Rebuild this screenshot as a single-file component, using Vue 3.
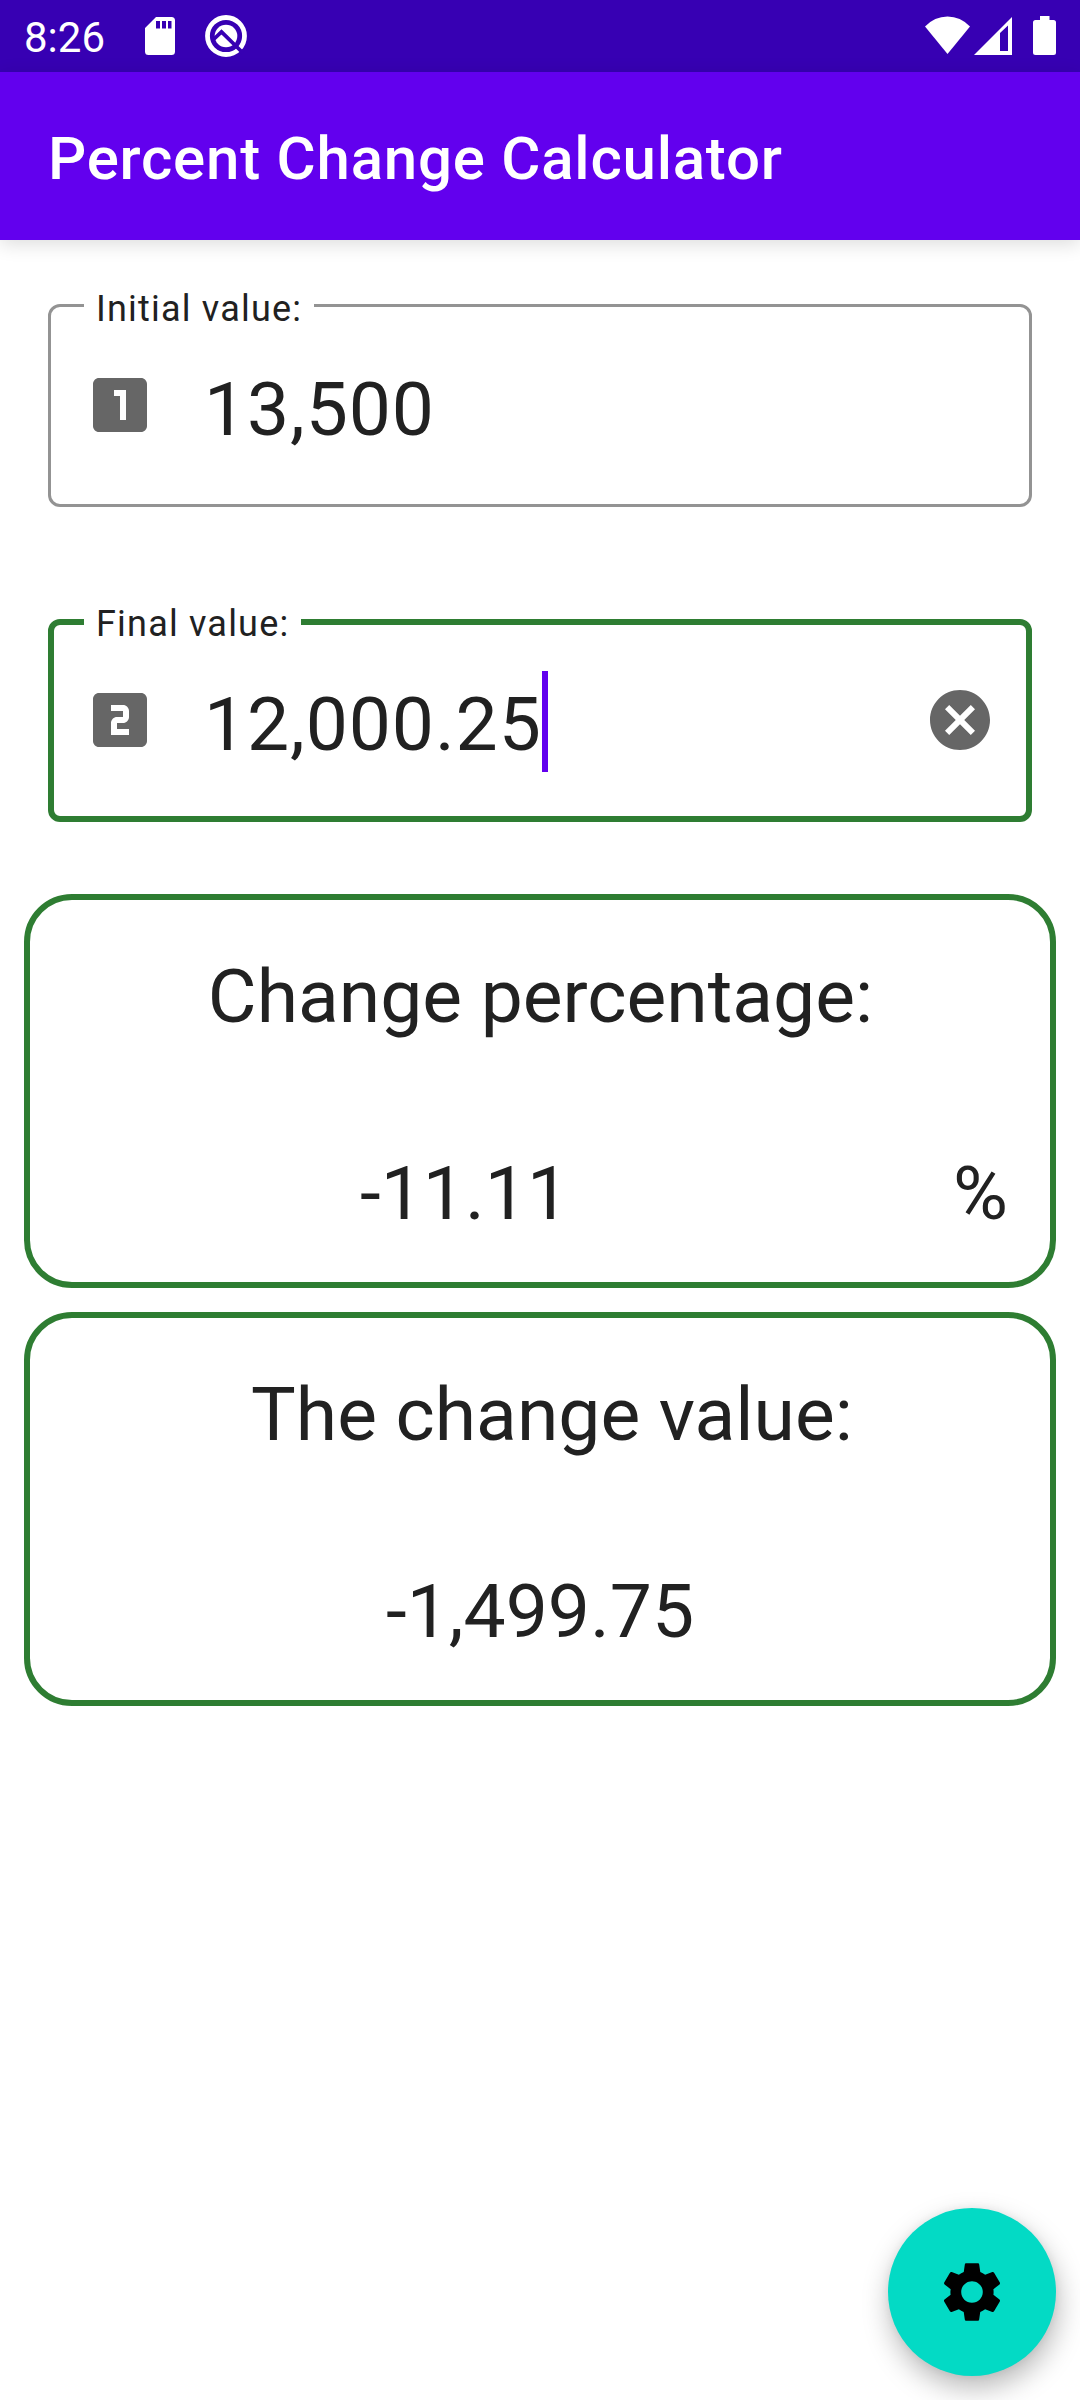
<script setup>
import { ref, computed } from "vue";

const initial = ref(13500);
const final = ref(12000.25);

const format = (value) =>
  value.toLocaleString("en-US", { maximumFractionDigits: 2 });

const change = computed(() => final.value - initial.value);
const percent = computed(() => (change.value / initial.value) * 100);
const clearFinal = () => {
  final.value = 0;
};
</script>

<template>
  <div class="screen">
    <div class="status-bar">
      <span class="clock">8:26</span>
      <svg class="sd" viewBox="0 0 30 38">
        <path
          fill-rule="evenodd"
          d="M11 0H26.5Q30 0 30 3.5V34.5Q30 38 26.5 38H3.5Q0 38 0 34.5V11ZM11 4V11.5H15V4ZM17 4V11.5H21V4ZM23 4V11.5H26.5V4Z"
        />
      </svg>
      <svg class="q-icon" viewBox="0 0 42 42">
        <circle cx="21" cy="21" r="18.5" fill="none" stroke="#fff" stroke-width="4.8" />
        <circle cx="21" cy="21" r="11.3" />
        <path d="M9 24L16.500 16.800L38 38" fill="none" stroke="#3700b3" stroke-width="3.8" />
      </svg>
      <div class="system">
        <svg class="wifi" viewBox="0 0 45 38">
          <path d="M0 10.500Q9.500 0.500 22.500 0.500T45 10.500L22.500 38Z" />
        </svg>
        <svg class="signal" viewBox="0 0 38 38">
          <path fill-rule="evenodd" d="M0 38L38 0V38ZM26 16V34H34V8.500Z" />
        </svg>
        <svg class="battery" viewBox="0 0 23 39">
          <path d="M7 0H16.500V4H20.500Q23 4 23 6.500V36.500Q23 39 20.500 39H2.500Q0 39 0 36.500V6.500Q0 4 2.500 4H7Z" />
        </svg>
      </div>
    </div>

    <header class="app-bar">
      <h1>Percent Change Calculator</h1>
    </header>

    <main>
      <div class="field">
        <label>Initial value:</label>
        <svg class="icon" viewBox="0 0 24 24">
          <path
            d="M19 3H5c-1.100 0-2 .9-2 2v14c0 1.100.9 2 2 2h14c1.100 0 2-.9 2-2V5c0-1.100-.9-2-2-2zM14 17h-2V9h-2V7h4v10z"
          />
        </svg>
        <span class="value">{{ format(initial) }}</span>
      </div>

      <div class="field active">
        <label>Final value:</label>
        <svg class="icon" viewBox="0 0 24 24">
          <path
            d="M19 3H5c-1.100 0-2 .9-2 2v14c0 1.100.9 2 2 2h14c1.100 0 2-.9 2-2V5c0-1.100-.9-2-2-2zM15 11c0 1.110-.9 2-2 2h-2v2h4v2H9v-4c0-1.110.9-2 2-2h2V9H9V7h4c1.100 0 2 .89 2 2v2z"
          />
        </svg>
        <span class="value">{{ format(final) }}</span>
        <span class="caret"></span>
        <svg class="icon clear" viewBox="0 0 24 24" @click="clearFinal">
          <path
            d="M12 2C6.470 2 2 6.470 2 12s4.470 10 10 10 10-4.470 10-10S17.530 2 12 2zM17 15.590L15.590 17 12 13.410 8.410 17 7 15.590 10.590 12 7 8.410 8.410 7 12 10.590 15.590 7 17 8.410 13.410 12z"
          />
        </svg>
      </div>

      <section class="card">
        <h2>Change percentage:</h2>
        <div class="result with-unit">
          <span class="number">{{ format(percent) }}</span>
          <span class="unit">%</span>
        </div>
      </section>

      <section class="card">
        <h2 class="shifted">The change value:</h2>
        <div class="result">
          <span class="number">{{ format(change) }}</span>
        </div>
      </section>
    </main>

    <button class="fab">
      <svg viewBox="0 0 24 24">
        <path
          d="M19.140,12.940c0.040-0.300,0.060-0.610,0.060-0.940c0-0.320-0.020-0.640-0.070-0.940l2.030-1.580c0.180-0.140,0.230-0.410,0.120-0.610l-1.920-3.320c-0.120-0.220-0.370-0.290-0.590-0.220l-2.390,0.960c-0.500-0.380-1.030-0.700-1.620-0.940L14.400,2.810c-0.040-0.240-0.240-0.410-0.480-0.410h-3.840c-0.240,0-0.430,0.170-0.470,0.410L9.250,5.350C8.660,5.590,8.120,5.920,7.630,6.290L5.240,5.330c-0.220-0.080-0.470,0-0.590,0.220L2.740,8.870C2.620,9.080,2.660,9.340,2.860,9.480l2.030,1.580C4.840,11.360,4.800,11.690,4.800,12s0.020,0.640,0.070,0.940l-2.030,1.580c-0.180,0.140-0.230,0.410-0.120,0.610l1.920,3.320c0.120,0.220,0.370,0.290,0.590,0.220l2.390-0.960c0.500,0.380,1.030,0.700,1.620,0.940l0.360,2.540c0.050,0.240,0.240,0.410,0.480,0.410h3.840c0.240,0,0.440-0.170,0.470-0.410l0.360-2.540c0.590-0.240,1.130-0.560,1.620-0.940l2.390,0.960c0.220,0.080,0.470,0,0.590-0.220l1.920-3.320c0.120-0.220,0.070-0.470-0.120-0.610L19.140,12.940zM12,15.600c-1.980,0-3.600-1.620-3.600-3.600s1.620-3.600,3.600-3.600s3.600,1.620,3.600,3.600S13.980,15.600,12,15.600z"
        />
      </svg>
    </button>
  </div>
</template>

<style>
body {
  margin: 0;
  background: #fff;
}
</style>

<style scoped>
.screen {
  position: relative;
  width: 1080px;
  height: 2400px;
  overflow: hidden;
  background: #fff;
  color: #212121;
  font-family: Roboto, sans-serif;
}

h1,
h2 {
  margin: 0;
}

svg {
  display: block;
  flex-shrink: 0;
}

.status-bar {
  display: flex;
  align-items: flex-start;
  box-sizing: border-box;
  height: 72px;
  padding: 0 24px;
  background: #3700b3;
  color: #fff;
}

.status-bar svg {
  fill: #fff;
}

.clock {
  width: 121px;
  padding-top: 13px;
  font-size: 42px;
  line-height: 49px;
}

.sd {
  width: 30px;
  height: 38px;
  margin-top: 17px;
}

.q-icon {
  width: 42px;
  height: 42px;
  margin: 15px 0 0 30px;
}

.system {
  display: flex;
  margin: 16px 0 0 auto;
}

.wifi {
  width: 45px;
  height: 38px;
}

.signal {
  width: 38px;
  height: 38px;
  margin: 1px 21px 0 4px;
}

.battery {
  width: 23px;
  height: 39px;
}

.app-bar {
  display: flex;
  align-items: center;
  box-sizing: border-box;
  height: 168px;
  padding: 6px 48px 0;
  background: #6200ee;
  box-shadow: 0 4px 18px rgba(0, 0, 0, 0.14);
  color: #fff;
}

.app-bar h1 {
  font-size: 60px;
  font-weight: 500;
  line-height: 70px;
  letter-spacing: 0.77px;
}

main {
  display: flex;
  flex-direction: column;
  padding: 64px 24px 0;
}

.field {
  position: relative;
  display: flex;
  align-items: center;
  box-sizing: border-box;
  height: 203px;
  margin: 0 24px 112px;
  padding: 0 33px 2px;
  border: 3px solid #939393;
  border-radius: 12px;
}

.field.active {
  margin-bottom: 72px;
  padding: 0 30px 2px;
  border: 6px solid #2e7d32;
}

.field label {
  position: absolute;
  top: -19px;
  left: 33px;
  padding: 0 12px;
  background: #fff;
  font-size: 36px;
  line-height: 42px;
  letter-spacing: 1.2px;
}

.field.active label {
  top: -22px;
  left: 30px;
}

.icon {
  width: 72px;
  height: 72px;
  fill: #666;
}

.value {
  margin: 9px 0 0 48px;
  font-size: 75px;
  line-height: 88px;
  letter-spacing: 0.9px;
}

.caret {
  width: 6px;
  height: 101px;
  margin-top: 3px;
  background: #6200ee;
}

.clear {
  margin-left: auto;
  cursor: pointer;
}

.card {
  box-sizing: border-box;
  height: 394px;
  margin-bottom: 24px;
  padding: 52px 42px 0;
  border: 6px solid #2e7d32;
  border-radius: 48px;
  font-size: 75px;
  line-height: 88px;
}

.card h2 {
  padding-left: 1px;
  font-size: 75px;
  font-weight: 400;
  text-align: center;
}

.card h2.shifted {
  padding-left: 24px;
}

.result {
  display: flex;
  margin-top: 109px;
}

.number {
  flex: 1;
  text-align: center;
}

.with-unit .number {
  padding-right: 96px;
}

.fab {
  position: absolute;
  right: 24px;
  bottom: 24px;
  display: flex;
  align-items: center;
  justify-content: center;
  width: 168px;
  height: 168px;
  padding: 0;
  border: 0;
  border-radius: 50%;
  background: #03dac5;
  box-shadow: 2px 12px 28px rgba(0, 0, 0, 0.28), 0 0 8px rgba(0, 0, 0, 0.06);
}

.fab svg {
  width: 72px;
  height: 72px;
  fill: #000;
}
</style>
